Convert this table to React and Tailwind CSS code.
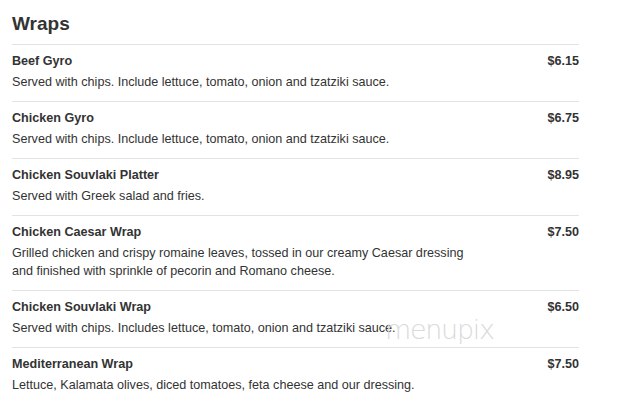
export default function App() {
  const items = [
    { name: "Beef Gyro", price: "$6.15", desc: ["Served with chips. Include lettuce, tomato, onion and tzatziki sauce."] },
    { name: "Chicken Gyro", price: "$6.75", desc: ["Served with chips. Include lettuce, tomato, onion and tzatziki sauce."] },
    { name: "Chicken Souvlaki Platter", price: "$8.95", desc: ["Served with Greek salad and fries."] },
    { name: "Chicken Caesar Wrap", price: "$7.50", desc: ["Grilled chicken and crispy romaine leaves, tossed in our creamy Caesar dressing", "and finished with sprinkle of pecorin and Romano cheese."] },
    { name: "Chicken Souvlaki Wrap", price: "$6.50", desc: ["Served with chips. Includes lettuce, tomato, onion and tzatziki sauce."] },
    { name: "Mediterranean Wrap", price: "$7.50", desc: ["Lettuce, Kalamata olives, diced tomatoes, feta cheese and our dressing."] },
  ];
  return (
    <div className="relative w-[618px] h-[415px] overflow-hidden bg-white text-[#333] font-['Liberation_Sans',Arial,sans-serif]">
      <div className="pl-[12px] pr-[39px]">
        <h1 className="pt-[12px] pb-[9px] text-[19px] leading-[23px] font-bold text-[#333]">Wraps</h1>
        {items.map((it, i) => (
          <div key={i} className="border-t border-[#e3e3e3] pt-[8px] pb-[10px]">
            <div className="flex justify-between text-[12.6px] leading-[16px] font-bold">
              <span>{it.name}</span>
              <span>{it.price}</span>
            </div>
            <div className="mt-[4px] text-[12.6px] leading-[18px]">
              {it.desc.map((d, j) => (
                <div key={j}>{d}</div>
              ))}
            </div>
          </div>
        ))}
      </div>
      <div className="absolute left-[385px] top-[315px] text-[27px] leading-[30px] tracking-[-1.3px] font-['DejaVu_Sans',sans-serif] font-extralight text-[#dadada]">menupix</div>
    </div>
  );
}
